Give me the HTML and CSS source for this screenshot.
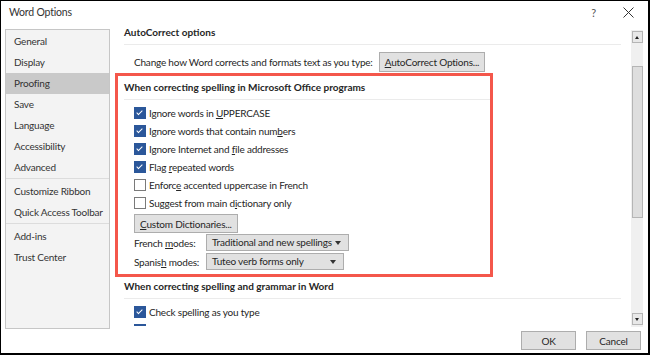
FILE: index.html
```html
<!DOCTYPE html>
<html lang="en">
<head>
    <meta charset="UTF-8">
    <title>Word Options</title>
    <link rel="stylesheet" href="styles.css">
</head>
<body>
    <div class="dialog">
        <div class="titlebar">
            <span class="title">Word Options</span>
            <span class="title-btn help">?</span>
            <span class="title-btn close">
                <svg width="11" height="11" viewBox="0 0 11 11"><path d="M0.5 0.5 L10.5 10.5 M10.5 0.5 L0.5 10.5" stroke="#333" stroke-width="1"/></svg>
            </span>
        </div>

        <div class="body">
            <ul class="nav">
                <li>General</li>
                <li>Display</li>
                <li class="active">Proofing</li>
                <li>Save</li>
                <li>Language</li>
                <li>Accessibility</li>
                <li class="group-end">Advanced</li>
                <li>Customize Ribbon</li>
                <li class="group-end">Quick Access Toolbar</li>
                <li>Add-ins</li>
                <li>Trust Center</li>
            </ul>

            <div class="main">
                <div class="content">
                    <div class="plain">
                        <div class="heading">AutoCorrect options</div>
                        <div class="row change-row">
                            <span>Change how Word corrects and formats text as you type:</span>
                            <button class="btn ac-btn"><u>A</u>utoCorrect Options...</button>
                        </div>
                    </div>

                    <div class="highlight">
                        <div class="heading">When correcting spelling in Microsoft Office programs</div>
                        <div class="checks">
                            <div class="check"><span class="box on"></span><span>Ignore words in <u>U</u>PPERCASE</span></div>
                            <div class="check"><span class="box on"></span><span>Ignore words that contain num<u>b</u>ers</span></div>
                            <div class="check"><span class="box on"></span><span>Ignore Internet and <u>f</u>ile addresses</span></div>
                            <div class="check"><span class="box on"></span><span>Flag <u>r</u>epeated words</span></div>
                            <div class="check"><span class="box"></span><span>Enforc<u>e</u> accented uppercase in French</span></div>
                            <div class="check"><span class="box"></span><span>Suggest from main d<u>i</u>ctionary only</span></div>
                        </div>
                        <button class="btn dict-btn"><u>C</u>ustom Dictionaries...</button>
                        <div class="mode-row">
                            <span class="mode-label">French <u>m</u>odes:</span>
                            <span class="select fr">Traditional and new spellings<i class="caret"></i></span>
                        </div>
                        <div class="mode-row">
                            <span class="mode-label">Spanis<u>h</u> modes:</span>
                            <span class="select es">Tuteo verb forms only<i class="caret"></i></span>
                        </div>
                    </div>

                    <div class="plain">
                        <div class="heading">When correcting spelling and grammar in Word</div>
                        <div class="checks">
                            <div class="check"><span class="box on"></span><span>Check spelling as you type</span></div>
                            <div class="check"><span class="box on"></span><span>Mark grammar errors as you type</span></div>
                        </div>
                    </div>
                </div>

                <div class="scrollbar">
                    <span class="arrow up"></span>
                    <div class="track">
                        <div class="thumb"></div>
                    </div>
                    <span class="arrow down"></span>
                </div>
            </div>
        </div>

        <div class="footer">
            <button class="btn footer-btn">OK</button>
            <button class="btn footer-btn">Cancel</button>
        </div>
    </div>
</body>
</html>
```

FILE: styles.css
```css
html,
body {
    margin: 0;
    padding: 0;
    background: #fff;
}

.dialog {
    width: 650px;
    height: 355px;
    box-sizing: border-box;
    border-style: solid;
    border-color: #000;
    border-width: 1px 2px 2px 1px;
    background: #fff;
    font-family: Lato, sans-serif;
    font-size: 10px;
    letter-spacing: -0.2px;
    color: #262626;
    display: flex;
    flex-direction: column;
}

.titlebar {
    height: 22px;
    display: flex;
    align-items: center;
    padding: 0 0 0 8px;
}

.title {
    font-size: 10.5px;
    color: #333;
    flex: 1;
}

.title-btn {
    width: 35px;
    text-align: center;
    color: #555;
    font-size: 11px;
}

.close {
    display: flex;
    justify-content: center;
    margin-right: 2px;
}

.body {
    display: flex;
    height: 304px;
}

.nav {
    list-style: none;
    margin: 6px 0 0 4px;
    padding: 1px 0 0;
    width: 103px;
    height: 297px;
    box-sizing: content-box;
    border: 1px solid #c6c6c6;
    background: #f3f3f3;
}

.nav li {
    height: 21px;
    line-height: 21px;
    padding-left: 8px;
    color: #333;
    white-space: nowrap;
}

.nav li.active {
    background: #c9c9c9;
}

.nav li.group-end {
    border-bottom: 1px solid #dcdcdc;
    margin-bottom: 2px;
}

.main {
    flex: 1;
    display: flex;
    margin-left: 5px;
}

.content {
    flex: 1;
    height: 303px;
    overflow: hidden;
}

.plain {
    padding: 0 10px 0 9px;
}

.heading {
    font-weight: bold;
    letter-spacing: 0;
    height: 15px;
    line-height: 15px;
    padding-bottom: 4px;
    border-bottom: 1px solid #ebebeb;
    white-space: nowrap;
}

.plain .heading {
    padding-top: 2px;
}

.row {
    display: flex;
    align-items: center;
}

.change-row {
    margin-top: 7px;
    padding-left: 10px;
    gap: 6px;
    height: 20px;
}

.btn {
    font-family: inherit;
    font-size: 10px;
    letter-spacing: -0.2px;
    color: #262626;
    background: #e1e1e1;
    border: 1px solid #adadad;
    padding: 0 5px;
    height: 20px;
}

.highlight {
    margin: 1px 138px 0 0;
    border: 3px solid #f4574b;
    padding: 0 0 3px 6px;
}

.highlight .heading {
    padding-top: 4px;
}

.checks {
    padding: 4px 0 0 10px;
}

.check {
    display: flex;
    align-items: center;
    height: 18px;
    white-space: nowrap;
}

.box {
    width: 10px;
    height: 10px;
    border: 1px solid #7a7a7a;
    background: #fff;
    margin-right: 3px;
    position: relative;
    flex: none;
}

.box.on {
    background: #2b579a;
    border-color: #2b579a;
}

.box.on::after {
    content: "";
    position: absolute;
    left: 3px;
    top: 1px;
    width: 2px;
    height: 5px;
    border: solid #fff;
    border-width: 0 1.5px 1.5px 0;
    transform: rotate(45deg);
}

.dict-btn {
    margin: 2px 0 0 10px;
    height: 19px;
}

.mode-row {
    display: flex;
    align-items: center;
    height: 19px;
    padding-left: 10px;
    white-space: nowrap;
}

.mode-label {
    width: 72px;
}

.select {
    position: relative;
    height: 15px;
    line-height: 15px;
    background: #e1e1e1;
    border: 1px solid #adadad;
    padding-left: 5px;
}

.select.fr {
    width: 136px;
}

.select.es {
    width: 131px;
}

.caret {
    position: absolute;
    right: 7px;
    top: 6px;
    border-left: 3px solid transparent;
    border-right: 3px solid transparent;
    border-top: 4px solid #333;
}

.scrollbar {
    width: 12px;
    height: 297px;
    margin: 7px 5px 0 0;
    background: #f0f0f0;
    display: flex;
    flex-direction: column;
    align-items: center;
}

.arrow {
    width: 9px;
    height: 10px;
    margin-top: 1px;
    border: 1px solid #b5b5b5;
    background: #e8e8e8;
    position: relative;
}

.arrow::after {
    content: "";
    position: absolute;
    left: 2px;
    border-left: 2.5px solid transparent;
    border-right: 2.5px solid transparent;
}

.arrow.up::after {
    top: 4px;
    border-bottom: 3px solid #222;
}

.arrow.down {
    margin: 0 0 2px;
}

.arrow.down::after {
    top: 4px;
    border-top: 3px solid #222;
}

.track {
    flex: 1;
    width: 100%;
    padding-top: 23px;
    display: flex;
    justify-content: center;
}

.thumb {
    width: 9px;
    height: 150px;
    background: #dedede;
    border: 1px solid #b5b5b5;
}

.footer {
    display: flex;
    justify-content: flex-end;
    gap: 10px;
    padding: 4px 7px 0 0;
}

.footer-btn {
    width: 55px;
    height: 19px;
}
```
